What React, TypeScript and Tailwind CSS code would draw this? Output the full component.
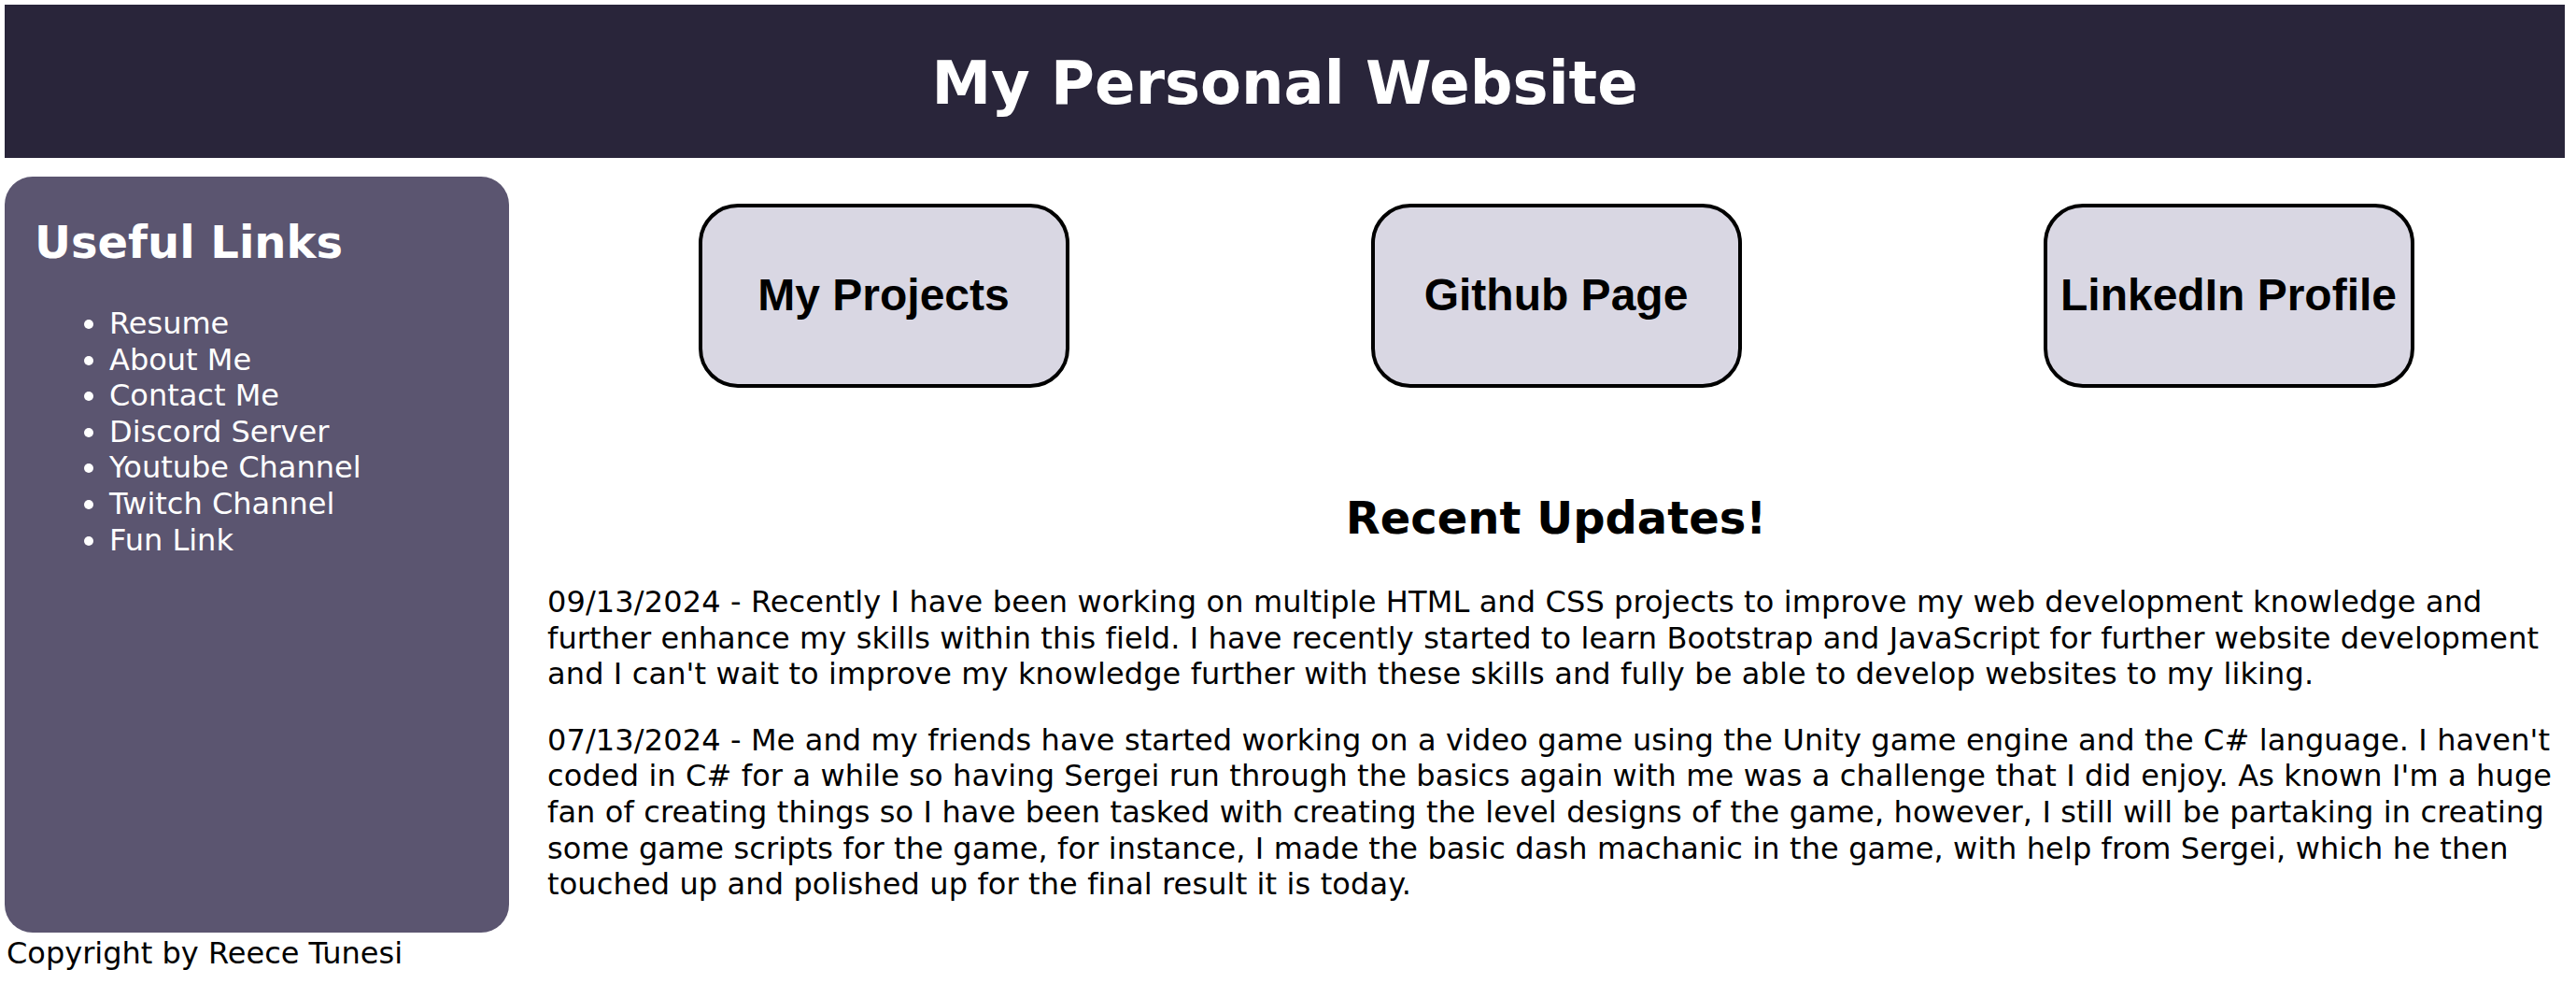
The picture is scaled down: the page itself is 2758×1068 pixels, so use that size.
const links = [
  "Resume",
  "About Me",
  "Contact Me",
  "Discord Server",
  "Youtube Channel",
  "Twitch Channel",
  "Fun Link",
];

const buttons = ["My Projects", "Github Page", "LinkedIn Profile"];

// lines kept as in the original page so the wrapping matches
const update1 = [
  "09/13/2024 - Recently I have been working on multiple HTML and CSS projects to improve my web development knowledge and",
  "further enhance my skills within this field. I have recently started to learn Bootstrap and JavaScript for further website development",
  "and I can't wait to improve my knowledge further with these skills and fully be able to develop websites to my liking.",
];

const update2 = [
  "07/13/2024 - Me and my friends have started working on a video game using the Unity game engine and the C# language. I haven't",
  "coded in C# for a while so having Sergei run through the basics again with me was a challenge that I did enjoy. As known I'm a huge",
  "fan of creating things so I have been tasked with creating the level designs of the game, however, I still will be partaking in creating",
  "some game scripts for the game, for instance, I made the basic dash machanic in the game, with help from Sergei, which he then",
  "touched up and polished up for the final result it is today.",
];

const App = () => {
  return (
    <div className="min-h-screen bg-white pt-[5px] pr-[12px] pl-[5px] font-['Tahoma','DejaVu_Sans',sans-serif] text-[32px] leading-[38.6px] text-black">
      <header className="flex h-[164px] items-center justify-center bg-[#29253a]">
        <h1 className="mt-[4px] text-[64px] font-bold text-white">My Personal Website</h1>
      </header>

      <div className="mt-[20px] flex">
        {/* sidebar */}
        <aside className="w-[540px] shrink-0 rounded-[30px] bg-[#5b5570] px-[32px] pt-[41px] text-white">
          <h2 className="text-[48px] leading-[58px] font-bold">Useful Links</h2>
          <ul className="mt-[39px] list-disc pl-[80px]">
            {links.map((link) => (
              <li key={link}>{link}</li>
            ))}
          </ul>
        </aside>

        {/* main content */}
        <main className="min-w-0 flex-1 pt-[29px] pl-[41px]">
          <div className="grid grid-cols-3">
            {buttons.map((b) => (
              <div key={b} className="flex justify-center">
                <div className="flex h-[197px] w-[397px] items-center justify-center rounded-[42px] border-[4px] border-black bg-[#d9d7e3] font-['Liberation_Sans',Arial,sans-serif] text-[48px] font-bold">
                  {b}
                </div>
              </div>
            ))}
          </div>

          <h2 className="mt-[110px] text-center text-[48px] leading-[58px] font-bold">Recent Updates!</h2>

          <p className="mt-[42px] whitespace-nowrap tracking-[0.12px]">
            {update1.map((line, i) => (
              <span key={i} className="block">
                {line}
              </span>
            ))}
          </p>
          <p className="mt-[32px] mb-[32px] whitespace-nowrap tracking-[0.12px]">
            {update2.map((line, i) => (
              <span key={i} className="block">
                {line}
              </span>
            ))}
          </p>
        </main>
      </div>

      <footer className="mt-[3px] pl-[2px]">Copyright by Reece Tunesi</footer>
    </div>
  );
};

export default App;
